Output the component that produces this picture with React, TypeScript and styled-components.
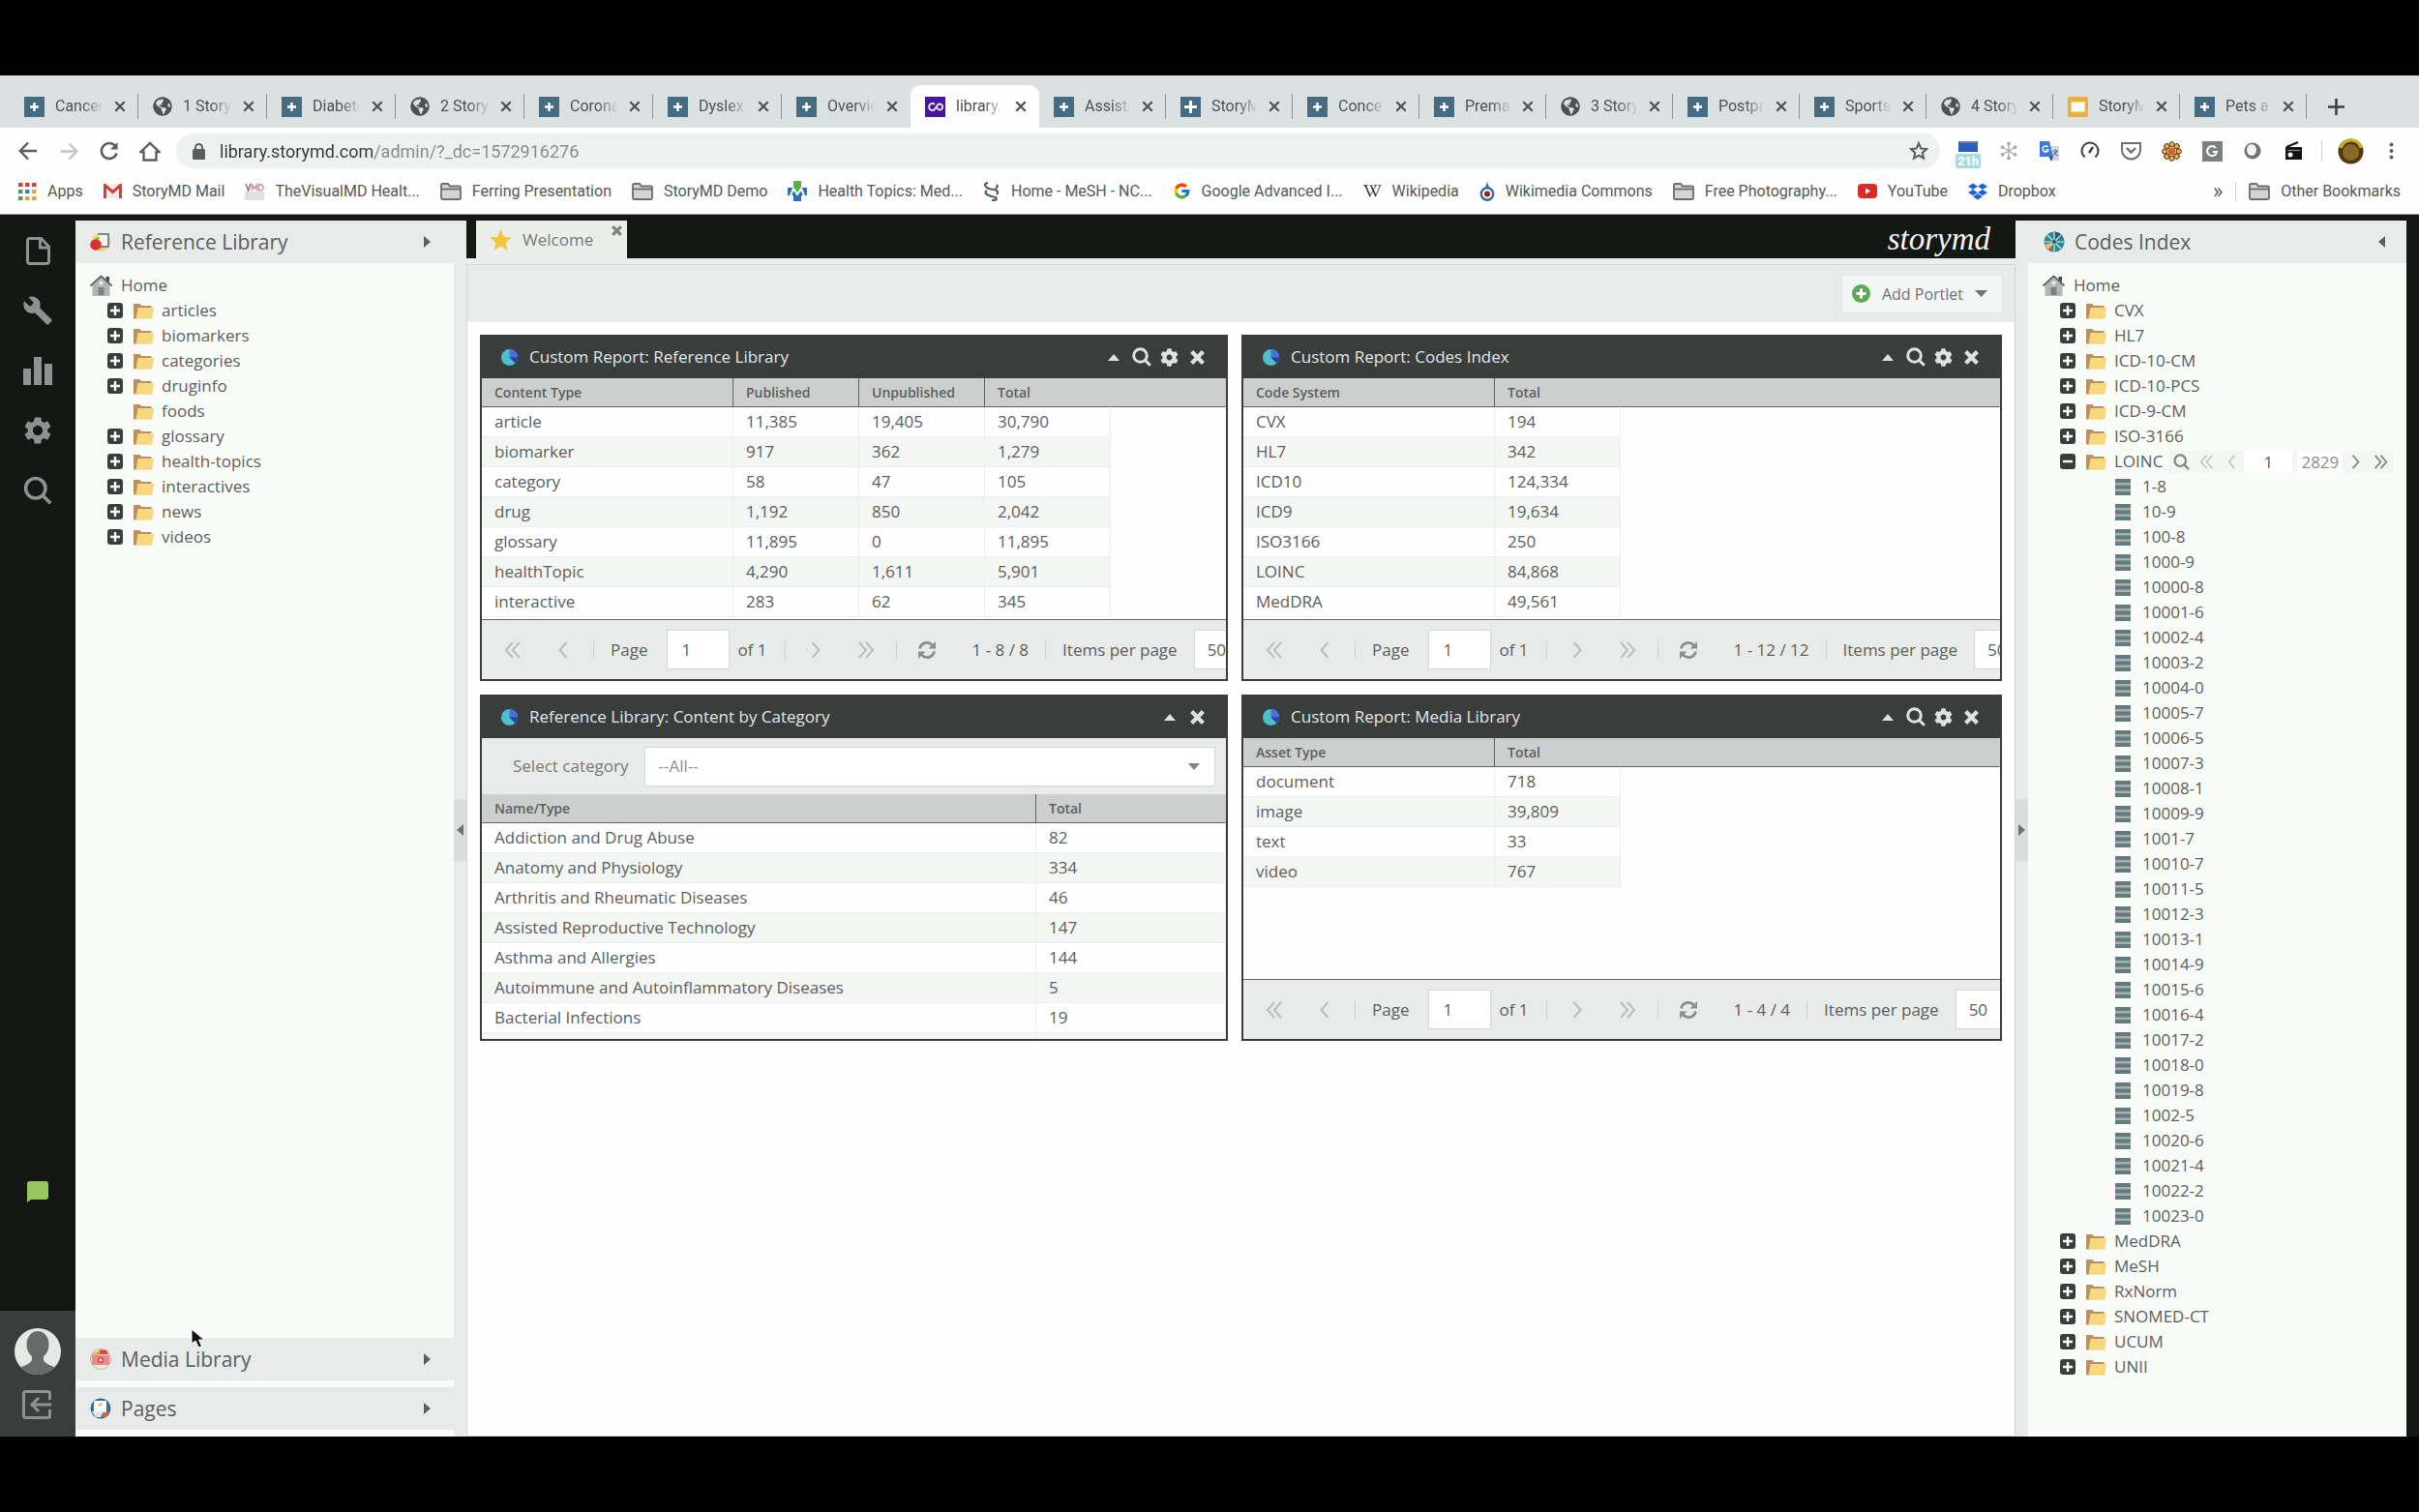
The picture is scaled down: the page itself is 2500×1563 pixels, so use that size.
import React from "react";
import styled, { createGlobalStyle } from "styled-components";
import { FaCog, FaDropbox, FaGlobeAmericas, FaWikipediaW } from "react-icons/fa";
import { FcGoogle } from "react-icons/fc";
import { MdBuild, MdSettings } from "react-icons/md";

const ui = `"Open Sans", "Noto Sans", sans-serif`;
const chrome = `Roboto, "Liberation Sans", sans-serif`;

const c = {
  ink: "#5b5f5d",
  dark: "#393e3d",
  black: "#141814",
  bar: "#e8ebe9",
  pane: "#f9fbf9",
  line: "#ebeeec",
  head: "#cccfcd",
};

const Global = createGlobalStyle`
  *, *::before, *::after { box-sizing: border-box; }
  body { margin: 0; background: #000; color: ${c.ink}; font-family: ${ui}; font-size: 17px; line-height: 26px; }
  button, input, select { font: inherit; color: inherit; margin: 0; padding: 0; border: 0; background: none; border-radius: 0; }
  ul { list-style: none; margin: 0; padding: 0; }
  h2 { margin: 0; font: inherit; }
  svg { display: block; flex: none; }
`;

const Screen = styled.div`
  display: flex;
  flex-direction: column;
  height: 100vh;
  min-height: 900px;
  padding: 78px 0;
  background: #000;
`;

/* ---------- Browser window ---------- */

const Browser = styled.header`
  flex: none;
  font-family: ${chrome};
  font-size: 16px;
  line-height: 20px;
  color: #55595a;
  background: #fdfefd;
  border-bottom: 1px solid #9a9d9b;
`;

const TabStrip = styled.nav`
  display: flex;
  align-items: flex-end;
  height: 54px;
  padding: 10px 10px 0;
  background: #dbe1e1;
`;

const BrowserTab = styled.div<{ $active?: boolean; $narrow?: boolean; $rule?: boolean }>`
  flex: 0 1 ${(p) => (p.$narrow ? 131 : 133)}px;
  min-width: 0;
  height: 44px;
  display: flex;
  align-items: center;
  padding: 0 0 0 15px;
  color: #4d5152;
  border-radius: 10px 10px 0 0;
  background: ${(p) => (p.$active ? "#fdfefd" : "transparent")};
  &::after {
    content: "";
    width: 1px;
    height: 26px;
    background: ${(p) => (p.$rule ? "#8d9292" : "transparent")};
  }
`;

const TabTitle = styled.span`
  flex: 1;
  min-width: 0;
  margin-left: 11px;
  overflow: hidden;
  white-space: nowrap;
  mask-image: linear-gradient(to right, #000 60%, transparent 105%);
`;

const TabClose = styled.button`
  width: 37px;
  height: 30px;
  display: grid;
  place-items: center;
`;

const NewTab = styled.button`
  width: 60px;
  height: 44px;
  display: grid;
  place-items: center;
  color: #3d4142;
`;

const Toolbar = styled.div`
  display: flex;
  align-items: center;
  padding: 6px 8px 0;
  height: 42px;
`;

const ToolButton = styled.button`
  width: 42px;
  height: 36px;
  display: grid;
  place-items: center;
  color: #5a5e5e;
`;

const Omnibox = styled.label`
  flex: 1;
  display: flex;
  align-items: center;
  height: 36px;
  margin: 0 8px 0 6px;
  padding: 0 12px 0 17px;
  border-radius: 18px;
  background: #edf1ef;
  color: #5a5e5e;
`;

const Address = styled.input`
  flex: 1;
  min-width: 0;
  height: 36px;
  margin-left: 15px;
  font-size: 18px;
  outline: 0;
  color: transparent;
  background: linear-gradient(to right, #353939 160px, #858a89 160px);
  background-clip: text;
`;

const Rule = styled.span<{ $h?: number; $gap?: number }>`
  flex: none;
  width: 1px;
  height: ${(p) => p.$h ?? 32}px;
  margin: 0 ${(p) => p.$gap ?? 0}px;
  background: #cdd1cf;
`;

const Bookmarks = styled.nav`
  display: flex;
  align-items: center;
  gap: 21px;
  height: 47px;
  padding: 0 19px;
`;

const Bookmark = styled.a`
  display: flex;
  align-items: center;
  gap: 11px;
  color: inherit;
  text-decoration: none;
  white-space: nowrap;
`;

const Overflow = styled.div`
  display: flex;
  align-items: center;
  gap: 13px;
  margin-left: auto;
`;

const More = styled.button`
  font-size: 22px;
`;

/* ---------- Application shell ---------- */

const Shell = styled.div`
  flex: 1;
  min-height: 0;
  display: flex;
  padding-right: 13px;
  background: ${c.black};
`;

const Rail = styled.aside`
  flex: none;
  width: 78px;
  display: flex;
  flex-direction: column;
  justify-content: space-between;
  color: #8e9290;
`;

const RailGroup = styled.div<{ $tone?: boolean }>`
  display: flex;
  flex-direction: column;
  align-items: center;
  padding: ${(p) => (p.$tone ? "16px 0 4px" : "6px 0")};
  background: ${(p) => (p.$tone ? c.dark : "transparent")};
`;

const RailSpring = styled.div`
  flex: 1;
  display: flex;
  flex-direction: column;
  justify-content: flex-end;
  align-items: center;
  padding-bottom: 93px;
`;

const RailButton = styled.button`
  width: 62px;
  height: 62px;
  display: grid;
  place-items: center;
`;

const RailSmall = styled.button<{ $h: number }>`
  width: 62px;
  height: ${(p) => p.$h}px;
  display: grid;
  place-items: center;
`;

const SidePanel = styled.section`
  flex: none;
  width: 404px;
  margin-top: 6px;
  display: flex;
  flex-direction: column;
  min-height: 0;
  background: ${c.bar};
`;

const PanelHead = styled.button`
  flex: none;
  display: flex;
  align-items: center;
  gap: 10px;
  width: 100%;
  height: 44px;
  padding: 0 24px 0 15px;
  font-size: 21px;
  text-align: left;
  background: ${c.bar};
  & > span { flex: 1; }
`;

const LibraryHead = styled(PanelHead)`
  padding-right: 37px;
`;

const CodesHead = styled(PanelHead)`
  padding: 0 22px 0 29px;
`;

const PanelRow = styled.div`
  flex: 1;
  min-height: 0;
  display: flex;
`;

const PanelMain = styled.div`
  flex: 1;
  min-width: 0;
  display: flex;
  flex-direction: column;
  gap: 7px;
  padding-bottom: 7px;
  background: ${c.pane};
`;

const PanelBody = styled.div`
  flex: 1;
  min-height: 0;
  overflow: hidden;
  padding: 10px 0 0 15px;
  margin-bottom: -7px;
`;

const Splitter = styled.div`
  flex: none;
  width: 13px;
  display: flex;
  align-items: center;
  padding-bottom: 42px;
  background: ${c.bar};
`;

const SplitHandle = styled.button`
  width: 13px;
  height: 64px;
  display: grid;
  place-items: center;
  background: #dadddb;
  color: #6d716f;
`;

const TreeRow = styled.div<{ $level: number }>`
  display: flex;
  align-items: center;
  height: 26px;
  padding-left: ${(p) => [0, 18, 75][p.$level]}px;
  gap: ${(p) => [9, 8, 12][p.$level]}px;
  white-space: nowrap;
`;

const Toggle = styled.button`
  width: 16px;
  height: 16px;
  margin-right: 3px;
`;

const TreeLabel = styled.span``;

const TreePager = styled.div`
  display: flex;
  align-items: center;
  height: 23px;
  line-height: 23px;
  margin-left: -2px;
  background: #f4f6f4;
  color: #8b8f8d;
`;

const TinyButton = styled.button<{ $faint?: boolean }>`
  width: 26px;
  height: 23px;
  display: grid;
  place-items: center;
  color: ${(p) => (p.$faint ? "#c3c7c5" : "#7f8381")};
`;

const TinyInput = styled.input`
  width: 50px;
  height: 23px;
  text-align: center;
  background: #fff;
  color: ${c.ink};
`;

const TinyTotal = styled.span`
  width: 47px;
  margin-left: 5px;
  text-align: center;
  background: #fcfdfc;
`;

/* ---------- Centre ---------- */

const Centre = styled.main`
  flex: 1;
  min-width: 0;
  display: flex;
  flex-direction: column;
`;

const DocTabs = styled.div`
  flex: none;
  display: flex;
  align-items: flex-end;
  justify-content: space-between;
  height: 45px;
  padding: 6px 26px 0 10px;
`;

const DocTab = styled.div`
  display: flex;
  align-items: center;
  height: 39px;
  padding: 0 4px 0 14px;
  gap: 11px;
  background: #ebedeb;
  color: #767a78;
`;

const DocClose = styled.button`
  align-self: flex-start;
  width: 12px;
  height: 12px;
  margin: 4px 0 0 8px;
  color: #7d807e;
`;

const Brand = styled.span`
  font-family: "Liberation Serif", serif;
  font-style: italic;
  font-size: 33px;
  line-height: 40px;
  color: #f4f6f4;
`;

const Workspace = styled.div`
  flex: 1;
  min-height: 0;
  display: flex;
  flex-direction: column;
  padding-top: 6px;
  background: #ebedeb;
`;

const Canvas = styled.div`
  flex: 1;
  border: 1px solid #d3d7d5;
  background: #fdfefd;
`;

const ActionBar = styled.div`
  display: flex;
  justify-content: flex-end;
  align-items: center;
  height: 59px;
  padding: 0 12px;
  background: ${c.bar};
`;

const AddButton = styled.button`
  display: flex;
  align-items: center;
  gap: 12px;
  height: 40px;
  padding: 0 15px 0 10px;
  font-size: 16px;
  border: 1px solid #dfe3e1;
  background: #f4f6f5;
  color: #6f7371;
`;

const Portlets = styled.div`
  display: grid;
  grid-template-columns: 773fr 786fr;
  gap: 14px;
  padding: 13px;
`;

const Portlet = styled.section`
  height: 358px;
  min-width: 0;
  display: flex;
  flex-direction: column;
  border: 2px solid ${c.dark};
  background: #fdfefd;
  overflow: hidden;
`;

const PortletHead = styled.div`
  flex: none;
  display: flex;
  align-items: center;
  height: 43px;
  padding: 0 15px 1px 20px;
  background: ${c.dark};
  color: #e3e6e4;
  & > h2 { flex: 1; margin-left: 12px; font-size: 17px; }
`;

const HeadTool = styled.button`
  width: 29px;
  height: 30px;
  display: grid;
  place-items: center;
  color: #dfe2e0;
`;

const GridWrap = styled.div`
  flex: 1;
  min-height: 0;
  overflow: hidden;
`;

const Grid = styled.table`
  width: 100%;
  table-layout: fixed;
  border-collapse: separate;
  border-spacing: 0;
`;

const Th = styled.th<{ $rule?: boolean }>`
  height: 30px;
  padding: 0 13px;
  font-size: 14px;
  font-weight: 600;
  line-height: 20px;
  text-align: left;
  background: ${c.head};
  border-right: 1px solid ${(p) => (p.$rule ? "#5f6361" : "transparent")};
  border-bottom: 1px solid #5f6361;
`;

const Td = styled.td<{ $odd?: boolean; $blank?: boolean }>`
  height: 31px;
  padding: 0 13px;
  line-height: 26px;
  ${(p) =>
    p.$blank
      ? ""
      : `background: ${p.$odd ? "#f4f6f4" : "#fdfefd"};
  border-right: 1px solid ${c.line};
  border-bottom: 1px solid ${c.line};`}
`;

const Pager = styled.div`
  flex: none;
  display: flex;
  align-items: center;
  height: 62px;
  padding-left: 6px;
  border-top: 1px solid #5f6361;
  background: ${c.bar};
  white-space: nowrap;
`;

const PageButton = styled.button<{ $strong?: boolean }>`
  flex: none;
  width: 52px;
  height: 40px;
  display: grid;
  place-items: center;
  color: ${(p) => (p.$strong ? "#8a8e8c" : "#b9bdbb")};
`;

const PagerLabel = styled.label`
  margin: 0 17px 0 12px;
`;

const PageInput = styled.input`
  width: 65px;
  height: 41px;
  padding: 0 14px;
  margin-left: 3px;
  border: 1px solid #d3d7d5;
  background: #fff;
`;

const PageOf = styled.span`
  margin: 0 13px 0 8px;
`;

const PageRange = styled.span`
  margin: 0 12px 0 21px;
`;

const PageSize = styled.select`
  appearance: none;
  flex: none;
  width: 86px;
  height: 41px;
  padding: 0 13px;
  border: 1px solid #d3d7d5;
  background: #fff;
`;

const Filter = styled.div`
  flex: none;
  display: flex;
  align-items: center;
  height: 58px;
  padding: 0 11px 0 32px;
  gap: 17px;
  background: ${c.bar};
  color: #767a78;
`;

const Combo = styled.div`
  flex: 1;
  display: grid;
  align-items: center;
  & > * { grid-area: 1 / 1; }
  & > svg { justify-self: end; margin-right: 16px; pointer-events: none; color: #7f8381; }
`;

const ComboSelect = styled.select`
  appearance: none;
  width: 100%;
  height: 41px;
  padding: 0 13px;
  border: 1px solid #d3d7d5;
  background: #fff;
  color: #8b8f8d;
`;

const Cursor = styled.svg`
  position: absolute;
  left: 197px;
  top: 1373px;
  pointer-events: none;
`;

/* ---------- Icons ---------- */

type TriDir = "up" | "down" | "left" | "right";
const Tri = ({ dir, w = 12, h = 7 }: { dir: TriDir; w?: number; h?: number }) => {
  const d = {
    up: `M0 ${h}L${w / 2} 0L${w} ${h}Z`,
    down: `M0 0H${w}L${w / 2} ${h}Z`,
    left: `M${w} 0V${h}L0 ${h / 2}Z`,
    right: `M0 0L${w} ${h / 2}L0 ${h}Z`,
  }[dir];
  return (
    <svg width={w} height={h} fill="currentColor">
      <path d={d} />
    </svg>
  );
};

const Chevron = ({ dir, double, size = 18 }: { dir: "left" | "right"; double?: boolean; size?: number }) => (
  <svg width={size} height={size} viewBox="0 0 18 18" fill="none" stroke="currentColor" strokeWidth="2">
    <g transform={dir === "right" ? "matrix(-1 0 0 1 18 0)" : undefined}>
      {double ? <path d="M9 1L2 9L9 17M16 1L9 9L16 17" /> : <path d="M12.500 1L5.500 9L12.500 17" />}
    </g>
  </svg>
);

const Lens = ({ size = 20, stroke = 3 }: { size?: number; stroke?: number }) => (
  <svg width={size} height={size} viewBox="0 0 20 20" fill="none" stroke="currentColor" strokeWidth={stroke}>
    <circle cx="8.500" cy="8.500" r="6.800" />
    <path d="M13 13L18.800 18.800" />
  </svg>
);

const Cross = ({ size = 14, stroke = 2 }: { size?: number; stroke?: number }) => (
  <svg width={size} height={size} viewBox="0 0 14 14" fill="none" stroke="currentColor" strokeWidth={stroke}>
    <path d="M1.500 1.500L12.500 12.500M12.500 1.500L1.500 12.500" />
  </svg>
);

const Refresh = () => (
  <svg width="20" height="20" viewBox="0 0 20 20" fill="none" stroke="currentColor" strokeWidth="2.800">
    <path d="M2.500 8.500A7.500 7.500 0 0 1 15.500 5M17.500 11.500A7.500 7.500 0 0 1 4.500 15" />
    <path d="M19 1V8.500H11.500ZM1 19V11.500H8.500Z" fill="currentColor" stroke="none" />
  </svg>
);

const PlusTile = ({ thick }: { thick?: boolean }) => (
  <svg width="21" height="21" viewBox="0 0 21 21">
    <rect width="21" height="21" fill="#466c82" />
    <path
      d={thick ? "M10.500 4V17M4 10.500H17" : "M10.500 6V15M6 10.500H15"}
      stroke="#fff"
      strokeWidth={thick ? 3 : 2.4}
    />
  </svg>
);

const InfinityTile = () => (
  <svg width="21" height="21" viewBox="0 0 21 21">
    <rect width="21" height="21" fill="#45199c" />
    <path d="M10 8A3.500 3.500 0 1 0 10 13L13 8.500A3 3 0 1 1 13 12.500L11.500 10.500" fill="none" stroke="#f0eafa" strokeWidth="1.800" />
  </svg>
);

const SlidesTile = () => (
  <svg width="21" height="21" viewBox="0 0 21 21">
    <rect width="21" height="21" rx="2" fill="#e9b13c" />
    <rect x="3.500" y="5.500" width="14" height="10" fill="#fff" />
  </svg>
);

const BarFolder = () => (
  <svg width="22" height="18" viewBox="0 0 22 18" fill="#d2d5d3" stroke="#6a6e6d" strokeWidth="1.800">
    <path d="M1 15V2.500Q1 1 2.500 1H8L10 3.500H19.500Q21 3.500 21 5V15.500Q21 17 19.500 17H2.500Q1 17 1 15Z" />
    <path d="M1 6.500H21" />
  </svg>
);

const FolderIcon = () => (
  <svg width="21" height="17" viewBox="0 0 21 17">
    <path d="M0 2Q0 1 1 1H6.500L8 3H18.500V9L2.500 16.500H0Z" fill="#b98f63" />
    <path d="M4.500 5H20.500Q21 5 20.900 5.800L19.500 16Q19.400 16.800 18.500 16.800H2.500Z" fill="#f5d97c" />
  </svg>
);

const HomeIcon = () => (
  <svg width="23" height="22" viewBox="0 0 23 22">
    <path d="M16.500 2H20V8L16.500 5Z" fill="#4a4442" />
    <path d="M11.500 3L20.500 11V22H2.500V11Z" fill="#b3b6b4" />
    <rect x="8.500" y="13" width="6" height="8" fill="#7c807e" />
    <circle cx="11.500" cy="8.500" r="2.200" fill="#e6e8e7" />
    <path d="M0.500 11.500L11.500 1.500L22.500 11.500" fill="none" stroke="#5b5f5d" strokeWidth="1.800" />
  </svg>
);

const ExpandIcon = ({ open }: { open?: boolean }) => (
  <svg width="16" height="16" viewBox="0 0 16 16">
    <rect width="16" height="16" rx="3" fill="#3a3f3c" />
    <path d={open ? "M3 8H13" : "M3 8H13M8 3V13"} stroke="#fff" strokeWidth="2.400" />
  </svg>
);

const RecordIcon = () => (
  <svg width="16" height="17" viewBox="0 0 16 17">
    <rect width="16" height="17" fill="#a3b0b2" />
    <path d="M0 2H16M0 8.500H16M0 15H16" stroke="#667a7e" strokeWidth="4" />
  </svg>
);

const PieIcon = () => (
  <svg width="17" height="17" viewBox="0 0 17 17">
    <circle cx="8.500" cy="8.500" r="8.500" fill="#4cc0cd" />
    <path d="M8.500 8.500V0A8.500 8.500 0 0 1 14.500 14.500Z" fill="#4a6fe0" />
    <path d="M8.500 8.500L17 8.500A8.500 8.500 0 0 1 14.500 14.500Z" fill="#2f3f9c" />
  </svg>
);

const LibraryBadge = () => (
  <svg width="22" height="22" viewBox="0 0 22 22">
    <circle cx="12" cy="11" r="9.500" fill="#f0d264" />
    <path d="M8 3H19V16H9" fill="#f3f4ee" stroke="#7b8a86" strokeWidth="2" />
    <circle cx="6" cy="14" r="5.800" fill="#d9342f" />
    <path d="M6 9Q6 6 10 6Q10 9 6 9Z" fill="#6aa83c" />
  </svg>
);

const MediaBadge = () => (
  <svg width="22" height="22" viewBox="0 0 22 22">
    <circle cx="11" cy="11" r="10.500" fill="#f3e7d2" stroke="#a9bfae" />
    <path d="M3 5L10 2V7H3Z" fill="#f0b23e" />
    <path d="M10 1.500H17L19 6H10Z" fill="#d9483c" />
    <rect x="2" y="7" width="18" height="10" fill="#ea8a8e" />
    <circle cx="11" cy="12" r="3.500" fill="#d6565c" />
    <path d="M10 10L13 12L10 14Z" fill="#fff" />
  </svg>
);

const PagesBadge = () => (
  <svg width="22" height="22" viewBox="0 0 22 22">
    <circle cx="11" cy="11" r="10.500" fill="#3f6f86" />
    <path d="M4 3H17V15H4Z" fill="#fbfbf8" />
    <path d="M1.500 14H14L11 20H6Z" fill="#dfe7ea" />
    <path d="M14 15L20 14L16 20H12Z" fill="#d9633c" />
    <path d="M9 8L12 6" stroke="#e0a63c" strokeWidth="2" />
  </svg>
);

const CodesBadge = () => (
  <svg width="22" height="22" viewBox="0 0 22 22">
    <circle cx="11" cy="11" r="10.500" fill="#2c8a93" />
    <path d="M11 0.500A10.500 10.500 0 0 1 20 6L11 11Z" fill="#255f86" />
    <path d="M11 11L3 18L1 14Z" fill="#e8c24a" />
    <path d="M11 11L7 21L3 18Z" fill="#d9603c" />
    <path d="M11 1V21M1 11H21M4 4L18 18M18 4L4 18" stroke="#c9ecec" strokeWidth="1.200" />
    <circle cx="11" cy="11" r="2" fill="#1d5a66" />
  </svg>
);

/* ---------- Data ---------- */

type TabKind = "plus" | "bold" | "globe" | "app" | "slides";
const tabs: [TabKind, string][] = [
  ["plus", "Cancer"],
  ["globe", "1 Story"],
  ["plus", "Diabete"],
  ["globe", "2 Story"],
  ["plus", "Corona"],
  ["plus", "Dyslexi"],
  ["plus", "Overvie"],
  ["app", "library."],
  ["plus", "Assiste"],
  ["bold", "StoryM"],
  ["plus", "Conce"],
  ["plus", "Prema"],
  ["globe", "3 Story"],
  ["plus", "Postpa"],
  ["plus", "Sports"],
  ["globe", "4 Story"],
  ["slides", "StoryM"],
  ["plus", "Pets an"],
];

const tabIcon: Record<TabKind, React.ReactNode> = {
  plus: <PlusTile />,
  bold: <PlusTile thick />,
  globe: <FaGlobeAmericas size={20} color="#4d5152" />,
  app: <InfinityTile />,
  slides: <SlidesTile />,
};

const AppsIcon = () => (
  <svg width="19" height="18" viewBox="0 0 19 18">
    {["#c9453d", "#c9453d", "#c9453d", "#4d9a5c", "#3f7fc4", "#d9a83c", "#4d9a5c", "#d9a83c", "#d9a83c"].map((f, i) => (
      <rect key={i} x={(i % 3) * 7} y={Math.floor(i / 3) * 7} width="4.500" height="4" fill={f} />
    ))}
  </svg>
);

const MailIcon = () => (
  <svg width="19" height="15" viewBox="0 0 19 15" fill="none">
    <rect width="19" height="15" rx="1" fill="#ecebea" />
    <path d="M1.500 15V1.500L9.500 8.500L17.500 1.500V15" stroke="#cf4039" strokeWidth="3" />
  </svg>
);

const VmdIcon = () => (
  <svg width="20" height="18" viewBox="0 0 20 18" fill="none">
    <rect y="9" width="20" height="9" fill="#dfe1e0" />
    <path d="M1 1L3.500 8L6 1" stroke="#77797a" strokeWidth="1.500" />
    <path d="M7.500 8V2L10 6L12.500 2V8M14.500 1.800H16Q19 2 19 5T16 7.800H14.500Z" stroke="#d98a96" strokeWidth="1.400" />
  </svg>
);

const MedlineIcon = () => (
  <svg width="20" height="21" viewBox="0 0 20 21">
    <path d="M6 0H14V7H20V15H14V21H6V15H0V7H6Z" fill="#2f6fae" />
    <path d="M6 0H14V8L10 13L6 8Z" fill="#55b04a" />
    <path d="M3 15L6 8L10 14L14 8L17 15" fill="none" stroke="#fff" strokeWidth="2" />
  </svg>
);

const MeshIcon = () => (
  <svg width="18" height="20" viewBox="0 0 18 20" fill="none" stroke="#4f6064" strokeWidth="2.200">
    <path d="M5 1Q0 2 3 5T12 8Q17 10 14 13M14 3Q16 5 13 7M4 9Q1 11 4 13T13 16Q16 19 9 19" />
  </svg>
);

const CommonsIcon = () => (
  <svg width="16" height="20" viewBox="0 0 16 20" fill="none">
    <path d="M8 0L10 6H6Z" fill="#2f6d92" />
    <circle cx="8" cy="12.500" r="6.200" stroke="#2f6d92" strokeWidth="2.400" />
    <circle cx="8" cy="12.500" r="3" fill="#8f2326" />
  </svg>
);

const TubeIcon = () => (
  <svg width="20" height="15" viewBox="0 0 20 15">
    <rect width="20" height="15" rx="4" fill="#db2b28" />
    <path d="M8 4.500L13 7.500L8 10.500Z" fill="#fff" />
  </svg>
);

const bookmarks: [React.ReactNode, string][] = [
  [<AppsIcon />, "Apps"],
  [<MailIcon />, "StoryMD Mail"],
  [<VmdIcon />, "TheVisualMD Healt..."],
  [<BarFolder />, "Ferring Presentation"],
  [<BarFolder />, "StoryMD Demo"],
  [<MedlineIcon />, "Health Topics: Med..."],
  [<MeshIcon />, "Home - MeSH - NC..."],
  [<FcGoogle size={19} />, "Google Advanced I..."],
  [<FaWikipediaW size={19} color="#333" />, "Wikipedia"],
  [<CommonsIcon />, "Wikimedia Commons"],
  [<BarFolder />, "Free Photography..."],
  [<TubeIcon />, "YouTube"],
  [<FaDropbox size={20} color="#1f62d8" />, "Dropbox"],
];

const extensions: [string, React.ReactNode][] = [
  [
    "Calendar",
    <svg width="26" height="36" viewBox="0 -8 26 36">
      <rect x="3" y="0" width="20" height="11" fill="#2c5cc0" />
      <rect x="4" y="0" width="18" height="2" fill="#6f7f9c" />
      <rect y="13" width="26" height="15" rx="2" fill="#a4dde0" />
      <text x="13" y="25" textAnchor="middle" fontSize="13" fontFamily="Roboto, sans-serif" fontWeight="700" fill="#fff">21h</text>
    </svg>,
  ],
  [
    "Snow",
    <svg width="18" height="20" viewBox="0 0 18 20" fill="none" stroke="#a9adab" strokeWidth="1.400">
      <path d="M9 3V17M2 6L16 14M16 6L2 14" />
      <g fill="#a9adab" stroke="none">
        <circle cx="9" cy="2.500" r="1.900" />
        <circle cx="9" cy="17.500" r="1.900" />
        <circle cx="2.500" cy="6.200" r="1.900" />
        <circle cx="15.500" cy="6.200" r="1.900" />
        <circle cx="2.500" cy="13.800" r="1.900" />
        <circle cx="15.500" cy="13.800" r="1.900" />
      </g>
    </svg>,
  ],
  [
    "Translate",
    <svg width="21" height="21" viewBox="0 0 21 21">
      <path d="M8 5H20V20H12Z" fill="#d5d8d8" />
      <path d="M0 0H10L14 16H0Z" fill="#3f78d8" />
      <path d="M9.500 16H14L12 21Z" fill="#2a50a8" />
      <path d="M8.500 6A3 3 0 1 0 9 9H6.500" fill="none" stroke="#fff" strokeWidth="1.500" />
      <path d="M14 10H19M16.500 8.500V10M18 10Q17 13 14.500 14.500M15 11Q16 14 19 15" fill="none" stroke="#5c6e9c" strokeWidth="1.200" />
    </svg>,
  ],
  [
    "Gauge",
    <svg width="20" height="20" viewBox="0 0 20 20" fill="none" stroke="#3b3f3e" strokeWidth="2">
      <path d="M4.500 16.500A8.500 8.500 0 1 1 15.500 16.500" />
      <path d="M9 12L13 6" strokeWidth="2.500" />
    </svg>,
  ],
  [
    "Pocket",
    <svg width="21" height="20" viewBox="0 0 21 20" fill="none" stroke="#6a6e6d" strokeWidth="2">
      <path d="M1 2H20V9A9.500 9.500 0 0 1 1 9Z" />
      <path d="M6 7L10.500 11.500L15 7" strokeWidth="2.400" />
    </svg>,
  ],
  [
    "Flower",
    <svg width="21" height="21" viewBox="0 0 21 21">
      {Array.from({ length: 8 }, (_, i) => (
        <circle key={i} cx="10.500" cy="3.200" r="2.600" fill="#e8b34a" stroke="#5a3216" strokeWidth="1" transform={`rotate(${i * 45} 10.500 10.500)`} />
      ))}
      <circle cx="10.500" cy="10.500" r="4" fill="#c9662c" />
    </svg>,
  ],
  [
    "Grammar",
    <svg width="21" height="21" viewBox="0 0 21 21">
      <rect width="21" height="21" fill="#7c807e" />
      <path d="M14 7A5 5 0 1 0 15 11H11" fill="none" stroke="#fff" strokeWidth="2" />
    </svg>,
  ],
  [
    "Ring",
    <svg width="18" height="18" viewBox="0 0 18 18">
      <circle cx="9" cy="9" r="8.500" fill="#6f7372" />
      <ellipse cx="8" cy="8" rx="5" ry="6" fill="#f1f3f2" />
    </svg>,
  ],
  [
    "Radio",
    <svg width="19" height="20" viewBox="0 0 19 20">
      <path d="M2 6L14 1" stroke="#111" strokeWidth="2" />
      <path d="M1 6H18V19H1Z" fill="#111" />
      <circle cx="6" cy="14" r="2.500" fill="#fdfefd" />
      <path d="M3 9.500H16" stroke="#8a8e8c" strokeWidth="1.200" />
    </svg>,
  ],
];

const libraryTree = [
  "articles",
  "biomarkers",
  "categories",
  "druginfo",
  "foods",
  "glossary",
  "health-topics",
  "interactives",
  "news",
  "videos",
];

const codeTree = [
  "CVX", "HL7", "ICD-10-CM", "ICD-10-PCS", "ICD-9-CM", "ISO-3166", "LOINC",
  "MedDRA", "MeSH", "RxNorm", "SNOMED-CT", "UCUM", "UNII",
];

const loinc = [
  "1-8", "10-9", "100-8", "1000-9", "10000-8", "10001-6", "10002-4", "10003-2", "10004-0", "10005-7",
  "10006-5", "10007-3", "10008-1", "10009-9", "1001-7", "10010-7", "10011-5", "10012-3", "10013-1", "10014-9",
  "10015-6", "10016-4", "10017-2", "10018-0", "10019-8", "1002-5", "10020-6", "10021-4", "10022-2", "10023-0",
];

const libraryReport = [
  ["article", "11,385", "19,405", "30,790"],
  ["biomarker", "917", "362", "1,279"],
  ["category", "58", "47", "105"],
  ["drug", "1,192", "850", "2,042"],
  ["glossary", "11,895", "0", "11,895"],
  ["healthTopic", "4,290", "1,611", "5,901"],
  ["interactive", "283", "62", "345"],
];

const codesReport = [
  ["CVX", "194"],
  ["HL7", "342"],
  ["ICD10", "124,334"],
  ["ICD9", "19,634"],
  ["ISO3166", "250"],
  ["LOINC", "84,868"],
  ["MedDRA", "49,561"],
];

const categoryReport = [
  ["Addiction and Drug Abuse", "82"],
  ["Anatomy and Physiology", "334"],
  ["Arthritis and Rheumatic Diseases", "46"],
  ["Assisted Reproductive Technology", "147"],
  ["Asthma and Allergies", "144"],
  ["Autoimmune and Autoinflammatory Diseases", "5"],
  ["Bacterial Infections", "19"],
  ["", ""],
];

const mediaReport = [
  ["document", "718"],
  ["image", "39,809"],
  ["text", "33"],
  ["video", "767"],
];

/* ---------- Composed parts ---------- */

const BrowserChrome = () => (
  <Browser>
    <TabStrip aria-label="Browser tabs">
      {tabs.map(([kind, title], i) => (
        <BrowserTab key={i} $active={i === 7} $narrow={i > 7} $rule={i !== 6 && i !== 7}>
          {tabIcon[kind]}
          <TabTitle>{title}</TabTitle>
          <TabClose aria-label={`Close ${title}`}>
            <Cross size={12} stroke={2.6} />
          </TabClose>
        </BrowserTab>
      ))}
      <NewTab aria-label="New tab">
        <svg width="17" height="17" viewBox="0 0 17 17" stroke="currentColor" strokeWidth="2.600">
          <path d="M8.500 0V17M0 8.500H17" />
        </svg>
      </NewTab>
    </TabStrip>
    <Toolbar>
      <ToolButton aria-label="Back">
        <svg width="20" height="20" viewBox="0 0 20 20" fill="none" stroke="currentColor" strokeWidth="2.400">
          <path d="M19 10H2M10 1.500L1.800 10L10 18.500" />
        </svg>
      </ToolButton>
      <ToolButton aria-label="Forward">
        <svg width="19" height="19" viewBox="0 0 20 20" fill="none" stroke="#bfc3c1" strokeWidth="2.400">
          <path d="M1 10H18M10 1.500L18.200 10L10 18.500" />
        </svg>
      </ToolButton>
      <ToolButton aria-label="Reload">
        <svg width="20" height="20" viewBox="0 0 20 20" fill="none" stroke="currentColor" strokeWidth="2.600">
          <path d="M16.500 5.500A8 8 0 1 0 17.500 12.500" />
          <path d="M18.500 1V8.500H11Z" fill="currentColor" stroke="none" />
        </svg>
      </ToolButton>
      <ToolButton aria-label="Home page">
        <svg width="22" height="21" viewBox="0 0 22 21" fill="none" stroke="currentColor" strokeWidth="2.400">
          <path d="M1.500 11L11 1.800L20.500 11H17.500V19.500H4.500V11Z" />
        </svg>
      </ToolButton>
      <Omnibox>
        <svg width="13" height="17" viewBox="0 0 13 17">
          <rect y="6" width="13" height="11" rx="1.500" fill="currentColor" />
          <path d="M3 7V4.500A3.500 3.500 0 0 1 10 4.500V7" fill="none" stroke="currentColor" strokeWidth="2" />
        </svg>
        <Address aria-label="Address" defaultValue="library.storymd.com/admin/?_dc=1572916276" />
        <svg width="20" height="20" viewBox="0 0 24 24" fill="none" stroke="currentColor" strokeWidth="2.400">
          <path d="M12 2.500L14.800 9L21.800 9.600L16.500 14.300L18.100 21.200L12 17.500L5.900 21.200L7.500 14.300L2.200 9.600L9.200 9Z" />
        </svg>
      </Omnibox>
      {extensions.map(([name, icon]) => (
        <ToolButton key={name} aria-label={name}>
          {icon}
        </ToolButton>
      ))}
      <Rule $h={22} $gap={8} />
      <ToolButton aria-label="Profile">
        <svg width="27" height="27" viewBox="0 0 27 27">
          <circle cx="13.500" cy="13.500" r="13" fill="#4d3a14" />
          <circle cx="13.500" cy="14.500" r="8.500" fill="#8c6828" />
          <path d="M3 10Q6 2 14 2Q22 2 24 10" fill="none" stroke="#c9b41c" strokeWidth="3" />
        </svg>
      </ToolButton>
      <ToolButton aria-label="Browser menu">
        <svg width="5" height="18" viewBox="0 0 5 18" fill="currentColor">
          <circle cx="2.500" cy="2.500" r="2" />
          <circle cx="2.500" cy="9" r="2" />
          <circle cx="2.500" cy="15.500" r="2" />
        </svg>
      </ToolButton>
    </Toolbar>
    <Bookmarks aria-label="Bookmarks">
      {bookmarks.map(([icon, name], i) => (
        <Bookmark key={i} href="#">
          {icon}
          {name}
        </Bookmark>
      ))}
      <Overflow>
        <More aria-label="More bookmarks">»</More>
        <Rule $h={20} />
        <Bookmark href="#">
          <BarFolder />
          Other Bookmarks
        </Bookmark>
      </Overflow>
    </Bookmarks>
  </Browser>
);

const SideRail = () => (
  <Rail>
    <RailGroup>
      <RailButton aria-label="New document">
        <svg width="25" height="29" viewBox="0 0 25 29" fill="none" stroke="currentColor" strokeWidth="3">
          <path d="M1.500 4Q1.500 1.500 4 1.500H15.500L23.500 10V25Q23.500 27.500 21 27.500H4Q1.500 27.500 1.500 25Z" />
          <path d="M14.500 2V11H23" />
        </svg>
      </RailButton>
      <RailButton aria-label="Tools">
        <MdBuild size={32} />
      </RailButton>
      <RailButton aria-label="Reports">
        <svg width="30" height="30" viewBox="0 0 30 30" fill="currentColor">
          <path d="M0 13H8V30H0ZM11 1H19V30H11ZM22 8H30V30H22Z" />
        </svg>
      </RailButton>
      <RailButton aria-label="Settings">
        <MdSettings size={34} />
      </RailButton>
      <RailButton aria-label="Search">
        <Lens size={30} stroke={2.4} />
      </RailButton>
    </RailGroup>
    <RailSpring>
      <RailSmall $h={60} aria-label="Chat">
        <svg width="22" height="22" viewBox="0 0 22 22" fill="#98c660">
          <path d="M0 3Q0 0 3 0H19Q22 0 22 3V16Q22 19 19 19H4L0 22Z" />
        </svg>
      </RailSmall>
    </RailSpring>
    <RailGroup $tone>
      <RailSmall $h={52} aria-label="Account">
        <svg width="48" height="48" viewBox="0 0 48 48">
          <defs>
            <clipPath id="face">
              <circle cx="24" cy="24" r="24" />
            </clipPath>
          </defs>
          <g clipPath="url(#face)">
            <rect width="48" height="48" fill="#e6e8e6" />
            <ellipse cx="24" cy="17" rx="11.500" ry="14" fill="#666a68" />
            <path d="M18 26H30V33Q32 37 41 40V48H7V40Q16 37 18 33Z" fill="#666a68" />
          </g>
        </svg>
      </RailSmall>
      <RailSmall $h={58} aria-label="Sign out">
        <svg width="32" height="30" viewBox="0 0 32 30" fill="none" stroke="currentColor" strokeWidth="3">
          <path d="M28.500 10V3.500Q28.500 1.500 26.500 1.500H3.500Q1.500 1.500 1.500 3.500V26.500Q1.500 28.500 3.500 28.500H26.500Q28.500 28.500 28.500 26.500V20" />
          <path d="M30 15H10M17 8L10 15L17 22" />
        </svg>
      </RailSmall>
    </RailGroup>
  </Rail>
);

const HomeRow = () => (
  <TreeRow $level={0}>
    <HomeIcon />
    <TreeLabel>Home</TreeLabel>
  </TreeRow>
);

const Branch = ({ name, open, leaf, children }: { name: string; open?: boolean; leaf?: boolean; children?: React.ReactNode }) => (
  <TreeRow $level={1}>
    <Toggle aria-label={`Toggle ${name}`} disabled={leaf}>
      {!leaf && <ExpandIcon open={open} />}
    </Toggle>
    <FolderIcon />
    <TreeLabel>{name}</TreeLabel>
    {children}
  </TreeRow>
);

const ReferencePanel = () => (
  <SidePanel>
    <LibraryHead>
      <LibraryBadge />
      <span>Reference Library</span>
      <Tri dir="right" w={7} h={12} />
    </LibraryHead>
    <PanelRow>
      <PanelMain>
        <PanelBody>
          <HomeRow />
          <ul>
            {libraryTree.map((name) => (
              <li key={name}>
                <Branch name={name} leaf={name === "foods"} />
              </li>
            ))}
          </ul>
        </PanelBody>
        <PanelHead>
          <MediaBadge />
          <span>Media Library</span>
          <Tri dir="right" w={7} h={12} />
        </PanelHead>
        <PanelHead>
          <PagesBadge />
          <span>Pages</span>
          <Tri dir="right" w={7} h={12} />
        </PanelHead>
      </PanelMain>
      <Splitter>
        <SplitHandle aria-label="Collapse left panel">
          <Tri dir="left" w={7} h={12} />
        </SplitHandle>
      </Splitter>
    </PanelRow>
  </SidePanel>
);

const CodesPanel = () => (
  <SidePanel>
    <CodesHead>
      <CodesBadge />
      <span>Codes Index</span>
      <Tri dir="left" w={7} h={12} />
    </CodesHead>
    <PanelRow>
      <Splitter>
        <SplitHandle aria-label="Collapse right panel">
          <Tri dir="right" w={7} h={12} />
        </SplitHandle>
      </Splitter>
      <PanelMain>
        <PanelBody>
          <HomeRow />
          <ul>
            {codeTree.map((name) => (
              <li key={name}>
                {name === "LOINC" ? (
                  <>
                    <Branch name={name} open>
                      <TreePager>
                        <TinyButton aria-label="Search LOINC">
                          <Lens size={17} stroke={2.6} />
                        </TinyButton>
                        <TinyButton $faint aria-label="First">
                          <Chevron dir="left" double size={15} />
                        </TinyButton>
                        <TinyButton $faint aria-label="Previous">
                          <Chevron dir="left" size={15} />
                        </TinyButton>
                        <TinyInput aria-label="LOINC page" defaultValue="1" />
                        <TinyTotal>2829</TinyTotal>
                        <TinyButton aria-label="Next">
                          <Chevron dir="right" size={15} />
                        </TinyButton>
                        <TinyButton aria-label="Last">
                          <Chevron dir="right" double size={15} />
                        </TinyButton>
                      </TreePager>
                    </Branch>
                    <ul>
                      {loinc.map((code) => (
                        <li key={code}>
                          <TreeRow $level={2}>
                            <RecordIcon />
                            <TreeLabel>{code}</TreeLabel>
                          </TreeRow>
                        </li>
                      ))}
                    </ul>
                  </>
                ) : (
                  <Branch name={name} />
                )}
              </li>
            ))}
          </ul>
        </PanelBody>
      </PanelMain>
    </PanelRow>
  </SidePanel>
);

const Report = ({ columns, widths, rows, fill }: { columns: string[]; widths: (number | null)[]; rows: string[][]; fill?: boolean }) => (
  <GridWrap>
    <Grid>
      <colgroup>
        {widths.map((w, i) => (
          <col key={i} width={w ?? undefined} />
        ))}
        {fill && <col />}
      </colgroup>
      <thead>
        <tr>
          {columns.map((name, i) => (
            <Th key={name} scope="col" $rule={i < columns.length - 1}>
              {name}
            </Th>
          ))}
          {fill && <Th aria-hidden />}
        </tr>
      </thead>
      <tbody>
        {rows.map((row, r) => (
          <tr key={r}>
            {row.map((cell, i) => (
              <Td key={i} $odd={r % 2 === 1}>
                {cell}
              </Td>
            ))}
            {fill && <Td $blank aria-hidden />}
          </tr>
        ))}
      </tbody>
    </Grid>
  </GridWrap>
);

const PagingBar = ({ id, range }: { id: string; range: string }) => (
  <Pager>
    <PageButton aria-label="First page"><Chevron dir="left" double /></PageButton>
    <PageButton aria-label="Previous page"><Chevron dir="left" /></PageButton>
    <Rule $h={18} $gap={5} />
    <PagerLabel htmlFor={`${id}-page`}>Page</PagerLabel>
    <PageInput id={`${id}-page`} defaultValue="1" />
    <PageOf>of 1</PageOf>
    <Rule $h={18} $gap={5} />
    <PageButton aria-label="Next page"><Chevron dir="right" /></PageButton>
    <PageButton aria-label="Last page"><Chevron dir="right" double /></PageButton>
    <Rule $h={18} $gap={5} />
    <PageButton $strong aria-label="Refresh"><Refresh /></PageButton>
    <PageRange>{range}</PageRange>
    <Rule $h={18} $gap={5} />
    <PagerLabel htmlFor={`${id}-size`}>Items per page</PagerLabel>
    <PageSize id={`${id}-size`} defaultValue="50">
      <option>50</option>
    </PageSize>
  </Pager>
);

const Window = ({ title, simple, children }: { title: string; simple?: boolean; children: React.ReactNode }) => (
  <Portlet>
    <PortletHead>
      <PieIcon />
      <h2>{title}</h2>
      <HeadTool aria-label="Collapse"><Tri dir="up" /></HeadTool>
      {!simple && (
        <>
          <HeadTool aria-label="Search"><Lens size={20} stroke={3} /></HeadTool>
          <HeadTool aria-label="Configure"><FaCog size={19} /></HeadTool>
        </>
      )}
      <HeadTool aria-label="Close"><Cross size={15} stroke={4} /></HeadTool>
    </PortletHead>
    {children}
  </Portlet>
);

export default function App() {
  return (
    <Screen>
      <Global />
      <BrowserChrome />
      <Shell>
        <SideRail />
        <ReferencePanel />
        <Centre>
          <DocTabs>
            <DocTab>
              <svg width="23" height="22" viewBox="0 0 23 22" fill="#f2c63f">
                <path d="M11.500 0L14.700 7.700L23 8.400L16.700 13.800L18.600 22L11.500 17.600L4.400 22L6.300 13.800L0 8.400L8.300 7.700Z" />
              </svg>
              Welcome
              <DocClose aria-label="Close Welcome"><Cross size={11} stroke={4} /></DocClose>
            </DocTab>
            <Brand>storymd</Brand>
          </DocTabs>
          <Workspace>
            <Canvas>
              <ActionBar>
                <AddButton>
                  <svg width="19" height="19" viewBox="0 0 19 19">
                    <circle cx="9.500" cy="9.500" r="9.500" fill="#5bab55" />
                    <path d="M9.500 4.500V14.500M4.500 9.500H14.500" stroke="#fff" strokeWidth="3" />
                  </svg>
                  Add Portlet
                  <Tri dir="down" w={13} h={7} />
                </AddButton>
              </ActionBar>
              <Portlets>
                <Window title="Custom Report: Reference Library">
                  <Report fill columns={["Content Type", "Published", "Unpublished", "Total"]} widths={[260, 130, 130, 130]} rows={libraryReport} />
                  <PagingBar id="library" range="1 - 8 / 8" />
                </Window>
                <Window title="Custom Report: Codes Index">
                  <Report fill columns={["Code System", "Total"]} widths={[260, 130]} rows={codesReport} />
                  <PagingBar id="codes" range="1 - 12 / 12" />
                </Window>
                <Window title="Reference Library: Content by Category" simple>
                  <Filter>
                    <label htmlFor="category">Select category</label>
                    <Combo>
                      <ComboSelect id="category" defaultValue="--All--">
                        <option>--All--</option>
                      </ComboSelect>
                      <Tri dir="down" w={12} h={7} />
                    </Combo>
                  </Filter>
                  <Report columns={["Name/Type", "Total"]} widths={[null, 196]} rows={categoryReport} />
                </Window>
                <Window title="Custom Report: Media Library">
                  <Report fill columns={["Asset Type", "Total"]} widths={[260, 130]} rows={mediaReport} />
                  <PagingBar id="media" range="1 - 4 / 4" />
                </Window>
              </Portlets>
            </Canvas>
          </Workspace>
        </Centre>
        <CodesPanel />
      </Shell>
      <Cursor width="16" height="22" viewBox="0 0 16 22">
        <path d="M1 1V16L5 13L8.500 20L11.500 18.500L8.500 12H14Z" fill="#111" stroke="#fff" strokeWidth="1" />
      </Cursor>
    </Screen>
  );
}
